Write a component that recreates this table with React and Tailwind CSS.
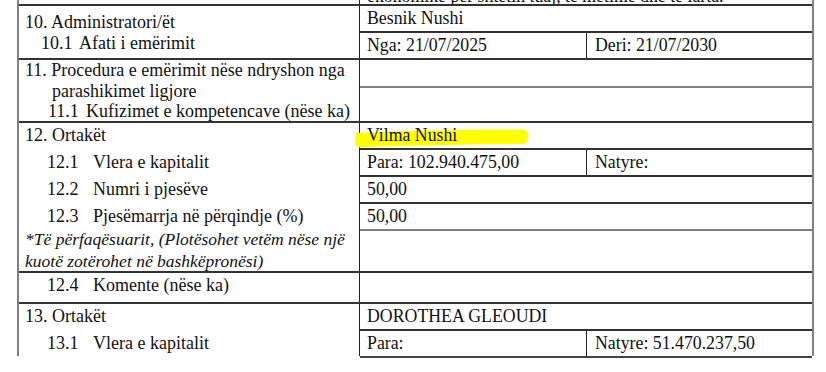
export default function App() {
  const dark = "border-[#333333]";
  const L = "w-[341px] shrink-0 border-r border-[#222222] pl-[6px] text-[18px]";
  return (
    <div className="w-[826px] h-[372px] bg-white overflow-hidden font-[family-name:'Liberation_Serif','Times_New_Roman',serif] text-[17.8px] leading-[20.5px] text-[#111111]">
      <div className="ml-[17px] w-[797px] border-x-2 border-[#808080]">
        {/* top strip (continuation of previous row) */}
        <div className="flex h-[4px]">
          <div className="w-[341px] shrink-0 border-r border-[#222222]" />
          <div className="relative flex-1 overflow-hidden">
            <div className="absolute left-[7px] top-[-14px] whitespace-nowrap">
              ekonomike për shtetin tuaj, të mëtime dhe të larta.
            </div>
          </div>
        </div>

        {/* 10 */}
        <div className={`flex h-[54px] border-t-2 ${dark}`}>
          <div className={`${L} pt-[6px]`}>
            <div>10. Administratori/ët</div>
            <div className="flex pl-[16px]">
              <span className="w-[38px] shrink-0">10.1</span>
              <span>Afati i emërimit</span>
            </div>
          </div>
          <div className="flex-1">
            <div className={`h-[27px] border-b-2 ${dark} pl-[7px] leading-[25px]`}>Besnik Nushi</div>
            <div className="flex h-[25px] leading-[25px]">
              <div className="w-[227px] shrink-0 border-r border-[#222222] pl-[7px]">Nga: 21/07/2025</div>
              <div className="flex-1 pl-[8px]">Deri: 21/07/2030</div>
            </div>
          </div>
        </div>

        {/* 11 */}
        <div className={`flex h-[63px] border-t-2 ${dark}`}>
          <div className={L}>
            <div>11. Procedura e emërimit nëse ndryshon nga</div>
            <div className="pl-[27px]">parashikimet ligjore</div>
            <div className="flex pl-[23px]">
              <span className="w-[38px] shrink-0">11.1</span>
              <span>Kufizimet e kompetencave (nëse ka)</span>
            </div>
          </div>
          <div className="flex-1">
            <div className="h-[28px] border-b-2 border-[#808080]" />
            <div className="h-[33px]" />
          </div>
        </div>

        {/* 12 */}
        <div className={`flex h-[150px] border-t-2 ${dark}`}>
          <div className={L}>
            <div className="h-[27px] leading-[25px]">12. Ortakët</div>
            <div className="flex h-[27px] pl-[22px] leading-[25px]">
              <span className="w-[46px] shrink-0">12.1</span>
              <span>Vlera e kapitalit</span>
            </div>
            <div className="flex h-[27px] pl-[22px] leading-[25px]">
              <span className="w-[46px] shrink-0">12.2</span>
              <span>Numri i pjesëve</span>
            </div>
            <div className="flex h-[27px] pl-[22px] leading-[25px]">
              <span className="w-[46px] shrink-0">12.3</span>
              <span>Pjesëmarrja në përqindje (%)</span>
            </div>
            <div className="-mt-[3px] italic text-[17.5px] leading-[22px]">
              <div className="whitespace-nowrap">*Të përfaqësuarit, (Plotësohet vetëm nëse një</div>
              <div>kuotë zotërohet në bashkëpronësi)</div>
            </div>
          </div>
          <div className="flex-1">
            <div className={`relative h-[27px] border-b-2 ${dark} pl-[7px] leading-[25px]`}>
              <svg
                className="absolute left-[-5px] top-[5px] z-10"
                width="174"
                height="21"
                viewBox="0 0 174 21"
              >
                <path
                  d="M1,5 C40,3 110,1 168,1.5 C173,2 174,6 173,10 C173,14 171,16 166,16 C110,16.5 50,18 2,19.5 C0,15 0,9 1,5 Z"
                  fill="#ffff00"
                />
              </svg>
              <span className="relative z-20">Vilma Nushi</span>
            </div>
            <div className={`flex h-[27px] border-b-2 ${dark} leading-[25px]`}>
              <div className="w-[227px] shrink-0 border-r border-[#222222] pl-[7px]">Para: 102.940.475,00</div>
              <div className="flex-1 pl-[8px]">Natyre:</div>
            </div>
            <div className={`h-[27px] border-b-2 ${dark} pl-[7px] leading-[25px]`}>50,00</div>
            <div className="h-[27px] border-b-2 border-[#808080] pl-[7px] leading-[25px]">50,00</div>
            <div className="h-[40px]" />
          </div>
        </div>

        {/* 12.4 */}
        <div className={`flex h-[31px] border-t-2 ${dark}`}>
          <div className={L}>
            <div className="flex pl-[22px] leading-[25px]">
              <span className="w-[46px] shrink-0">12.4</span>
              <span>Komente (nëse ka)</span>
            </div>
          </div>
          <div className="flex-1" />
        </div>

        {/* 13 */}
        <div className={`flex h-[54px] border-t-2 ${dark}`}>
          <div className={L}>
            <div className="h-[27px] leading-[25px]">13. Ortakët</div>
            <div className="flex h-[27px] pl-[22px] leading-[25px]">
              <span className="w-[46px] shrink-0">13.1</span>
              <span>Vlera e kapitalit</span>
            </div>
          </div>
          <div className="flex-1">
            <div className={`h-[27px] border-b-2 ${dark} pl-[7px] leading-[25px]`}>DOROTHEA GLEOUDI</div>
            <div className="flex h-[27px] border-b-2 border-[#444444] leading-[25px]">
              <div className="w-[227px] shrink-0 border-r border-[#222222] pl-[7px]">Para:</div>
              <div className="flex-1 pl-[8px]">Natyre: 51.470.237,50</div>
            </div>
          </div>
        </div>
      </div>
    </div>
  );
}
